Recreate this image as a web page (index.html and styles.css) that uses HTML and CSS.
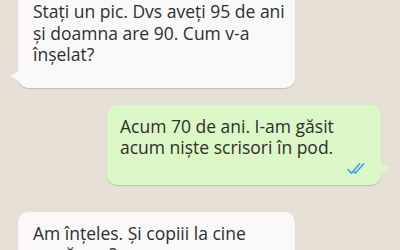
FILE: index.html
```html
<!DOCTYPE html>
<html lang="ro">

<head>
    <meta charset="UTF-8">
    <title>Chat</title>
    <link rel="stylesheet" href="styles.css">
</head>

<body>

    <div class="chat">
        <div class="bubble in first">
            <div class="text">Stați un pic. Dvs aveți 95 de ani și doamna are 90. Cum v-a înșelat?</div>
        </div>

        <div class="bubble out">
            <div class="text">Acum 70 de ani. I-am găsit acum niște scrisori în pod.</div>
            <div class="meta">
                <svg class="ticks" width="20" height="13" viewBox="0 0 20 13">
                    <path d="M1 7.5 L4.5 11.2 L12.5 2" />
                    <path d="M6.8 9.6 L8.3 11.2 L16.5 2" />
                </svg>
            </div>
        </div>

        <div class="bubble in last">
            <div class="text">Am înțeles. Și copiii la cine<br>au rămas?</div>
        </div>
    </div>

</body>

</html>
```

FILE: styles.css
```css
body {
    margin: 0;
    background: #e7e0d7;
    font-family: "Open Sans", "Noto Sans", sans-serif;
    color: #2e2e2e;
    overflow: hidden;
    height: 250px;
}

.chat {
    display: flex;
    flex-direction: column;
}

.bubble {
    position: relative;
    border-radius: 10px;
    box-shadow: 0 1px 1px rgba(0, 0, 0, 0.16);
    font-size: 17.5px;
    line-height: 21.5px;
}

.in {
    background: #f9f9f9;
    margin-left: 18px;
    width: 277px;
    padding-top: 11px;
}

.in .text {
    padding: 0 5px 0 15px;
}

.in::before {
    content: "";
    position: absolute;
    left: -8px;
    bottom: 6px;
    width: 9px;
    height: 10px;
    background: #f9f9f9;
    clip-path: polygon(100% 0, 0 42%, 100% 100%);
}

.first {
    margin-top: -10px;
    padding-bottom: 22px;
}

.last {
    margin-top: 27px;
    padding-bottom: 20px;
}

.out {
    background: #dcf8c6;
    margin-left: 107px;
    width: 274px;
    margin-top: 17px;
    padding-top: 11px;
    padding-bottom: 10px;
}

.out .text {
    padding: 0 13px;
}

.out::after {
    content: "";
    position: absolute;
    right: -10px;
    bottom: 10px;
    width: 11px;
    height: 10px;
    background: #dcf8c6;
    clip-path: polygon(0 0, 100% 25%, 0 100%);
}

.meta {
    display: flex;
    justify-content: flex-end;
    padding-right: 14px;
    margin-top: 3px;
    height: 13px;
}

.ticks path {
    fill: none;
    stroke: #3ba7e2;
    stroke-width: 1.7;
    stroke-linecap: round;
    stroke-linejoin: round;
}
```
